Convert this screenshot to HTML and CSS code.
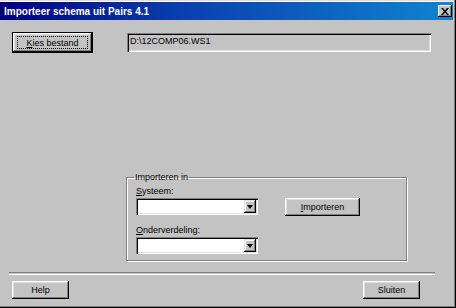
FILE: index.html
```html
<!DOCTYPE html>
<html>
<head>
    <meta charset="UTF-8">
    <title>Importeer schema uit Pairs 4.1</title>
    <link rel="stylesheet" href="styles.css">
</head>
<body>
    <div class="window">
        <div class="titlebar">
            <span class="title">Importeer schema uit Pairs 4.1</span>
            <span class="close">
                <svg width="8" height="7" viewBox="0 0 8 7"><path d="M0 0h2l2 2.5 2-2.5h2l-3 3.5 3 3.5h-2l-2-2.5-2 2.5h-2l3-3.5z" fill="#000"/></svg>
            </span>
        </div>
        <div class="main">
            <div class="filerow">
                <div class="btn default"><span class="focus"><u>K</u>ies bestand</span></div>
                <div class="pathfield">D:\12COMP06.WS1</div>
            </div>
            <fieldset class="group">
                <legend>Importeren in</legend>
                <div class="groupgrid">
                    <div class="col">
                        <div class="label"><u>S</u>ysteem:</div>
                        <div class="combo"><span class="arrow"></span></div>
                        <div class="label second"><u>O</u>nderverdeling:</div>
                        <div class="combo"><span class="arrow"></span></div>
                    </div>
                    <div class="btn import"><u>I</u>mporteren</div>
                </div>
            </fieldset>
        </div>
        <div class="separator"></div>
        <div class="footer">
            <div class="btn small">Help</div>
            <div class="btn small">Sluiten</div>
        </div>
    </div>
</body>
</html>
```

FILE: styles.css
```css
body{margin:0;font-family:"Liberation Sans",Arial,sans-serif;font-size:9px;color:#000;}
.window{
    box-sizing:border-box;
    width:456px;
    height:308px;
    padding:2px 3px 3px 0;
    display:flex;
    flex-direction:column;
    background:#c3c3c3;
    box-shadow:inset -1px -1px #000,inset -2px -2px #808080,inset 0 1px #dfdfdf,inset 0 2px #fff;
}
.titlebar{
    height:18px;
    display:flex;
    align-items:center;
    justify-content:space-between;
    padding:0 1px 0 4px;
    background:linear-gradient(to right,#000080 0%,#0a3fae 40%,#1084d0 100%);
}
.title{
    color:#fff;
    font-weight:bold;
    font-size:10px;
}
.close{
    box-sizing:border-box;
    width:14px;
    height:12px;
    display:flex;
    align-items:center;
    justify-content:center;
    background:#c3c3c3;
    box-shadow:inset -1px -1px #000,inset 1px 1px #fff,inset -2px -2px #808080;
}
.main{
    flex:1;
    padding:12px 0 0 12px;
}
.filerow{
    display:flex;
    align-items:flex-start;
}
.btn{
    box-sizing:border-box;
    display:flex;
    align-items:center;
    justify-content:center;
    background:#c3c3c3;
    box-shadow:inset -1px -1px #000,inset 1px 1px #fff,inset -2px -2px #808080,inset 2px 2px #dfdfdf;
}
.btn.default{
    width:81px;
    height:21px;
    border:1px solid #000;
}
.focus{
    box-sizing:border-box;
    width:71px;
    height:13px;
    display:flex;
    align-items:center;
    justify-content:center;
    border:1px dotted #000;
}
.pathfield{
    box-sizing:border-box;
    width:304px;
    height:19px;
    margin:1px 0 0 34px;
    padding:3px 0 0 3px;
    line-height:11px;
    box-shadow:inset 1px 1px #808080,inset 2px 2px #000,inset -1px -1px #fff,inset -2px -2px #dfdfdf;
}
.group{
    box-sizing:border-box;
    width:281px;
    margin:118px 0 0 114px;
    padding:1px 0 6px 9px;
    border:1px solid #808080;
    box-shadow:inset 1px 1px #fff,1px 1px #fff;
}
.group legend{
    padding:0 1px;
    margin-left:-2px;
    line-height:13px;
}
.groupgrid{
    display:flex;
    align-items:flex-start;
    gap:27px;
}
.col{
    width:122px;
}
.label{
    height:13px;
    line-height:13px;
}
.label.second{
    margin-top:9px;
}
.combo{
    box-sizing:border-box;
    height:17px;
    padding:2px;
    display:flex;
    justify-content:flex-end;
    background:#fff;
    box-shadow:inset 1px 1px #808080,inset 2px 2px #000,inset -1px -1px #fff,inset -2px -2px #dfdfdf;
}
.arrow{
    box-sizing:border-box;
    width:12px;
    height:13px;
    display:flex;
    align-items:center;
    justify-content:center;
    background:#c3c3c3;
    box-shadow:inset -1px -1px #000,inset 1px 1px #dfdfdf,inset -2px -2px #808080,inset 2px 2px #fff;
}
.arrow::after{
    content:"";
    border-left:3.5px solid transparent;
    border-right:3.5px solid transparent;
    border-top:4px solid #000;
}
.btn.import{
    width:75px;
    height:18px;
    margin-top:13px;
}
.separator{
    height:1px;
    width:426px;
    margin-left:9px;
    border-top:1px solid #808080;
    border-bottom:1px solid #fff;
}
.footer{
    display:flex;
    justify-content:space-between;
    padding:6px 33px 6px 12px;
}
.btn.small{
    width:57px;
    height:18px;
}
```
